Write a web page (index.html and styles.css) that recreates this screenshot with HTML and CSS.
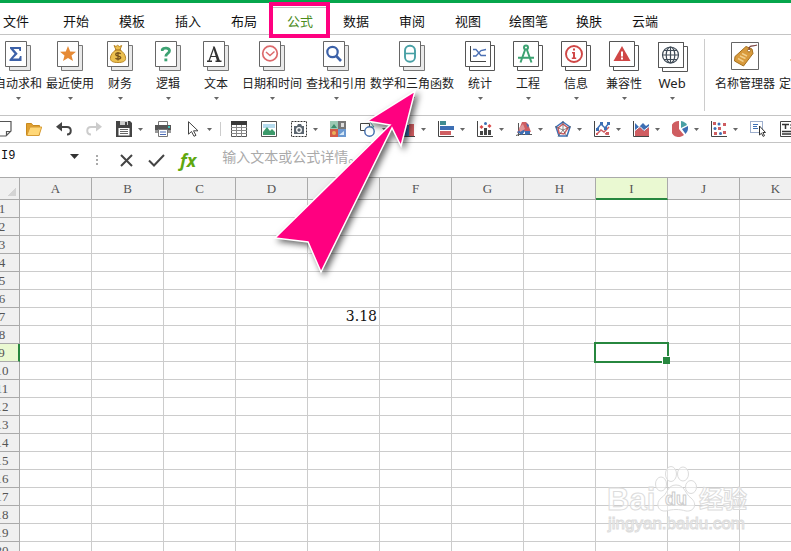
FILE: index.html
```html
<!DOCTYPE html>
<html lang="zh-CN">
<head>
<meta charset="utf-8">
<title>公式</title>
<link rel="stylesheet" href="styles.css">
</head>
<body>
<svg class="defs" aria-hidden="true">
  <symbol id="pages" viewBox="0 0 26 30">
    <path d="M4.500 4.500h21v25h-21z" fill="#e9e9e9" stroke="#777"/>
    <path d="M.5.5h21v25h-21z" fill="#fff" stroke="#666"/>
  </symbol>
  <symbol id="wide-pages" viewBox="0 0 30 30">
    <path d="M4.500 4.500h25v25h-25z" fill="#fff" stroke="#555"/>
    <path d="M.5.5h25v25h-25z" fill="#fff" stroke="#555"/>
  </symbol>
  <symbol id="caret" viewBox="0 0 5 3"><path d="M0 0h5L2.500 3z" fill="#666"/></symbol>
</svg>

<nav class="tabs">
  <button class="tab tab-file">文件</button>
  <button class="tab">开始</button>
  <button class="tab">模板</button>
  <button class="tab">插入</button>
  <button class="tab">布局</button>
  <button class="tab tab-active">公式</button>
  <button class="tab">数据</button>
  <button class="tab">审阅</button>
  <button class="tab">视图</button>
  <button class="tab">绘图笔</button>
  <button class="tab">换肤</button>
  <button class="tab">云端</button>
</nav>

<div class="ribbon">
  <button class="cmd">
    <svg width="26" height="30"><use href="#pages"/><path d="M5 6h11v4h-1.500l-.6-2H8.500l4.200 4.700L8 17.500h6l1-2.500h1.500v5H4.500v-1.500l5-5.700L5 7.500z" fill="#3c61a8"/></svg>
    <span>自动求和</span><svg class="caret" width="5" height="3"><use href="#caret"/></svg>
  </button>
  <button class="cmd">
    <svg width="26" height="30"><use href="#pages"/><path d="M11 5l2.200 5.400 5.800.4-4.500 3.700L16 20l-5-3.100L6 20l1.500-5.500L3 10.800l5.800-.4z" fill="#e68a35"/></svg>
    <span>最近使用</span><svg class="caret" width="5" height="3"><use href="#caret"/></svg>
  </button>
  <button class="cmd">
    <svg width="26" height="30"><use href="#pages"/><path d="M7 4.500l2 1 1.500-1.200L12.500 5.500l2.200-1-1.700 4.300c3 2 5.600 5 5.600 8.500 0 3-2.600 4.200-7.600 4.200s-7.600-1.200-7.600-4.200c0-3.500 2.600-6.500 5.600-8.500z" fill="#ecc04f" stroke="#b98525"/><path d="M8 9h6" stroke="#a26b17"/><path d="M13.700 12.800c-1-1.200-5-1.300-5 .6 0 2.200 5 1.200 5 3.200 0 2-4.200 1.800-5.200.5M11 11v8.500" fill="none" stroke="#76511a" stroke-width="1.300"/></svg>
    <span>财务</span><svg class="caret" width="5" height="3"><use href="#caret"/></svg>
  </button>
  <button class="cmd">
    <svg width="26" height="30"><use href="#pages"/><path d="M7.300 10V8.500C8.500 6.500 14.500 6.300 14.500 9.800c0 2.800-3.700 2.500-3.700 5.700" fill="none" stroke="#3ca272" stroke-width="2.800"/><path d="M9.400 17.500h2.900v2.800H9.400z" fill="#3ca272"/></svg>
    <span>逻辑</span><svg class="caret" width="5" height="3"><use href="#caret"/></svg>
  </button>
  <button class="cmd">
    <svg width="26" height="30"><use href="#pages"/><path d="M4 20.300h5M12.500 20.300h6" stroke="#333" stroke-width="1.500"/><path d="M6 20l4.700-13M7.500 15.500h6" fill="none" stroke="#333" stroke-width="1.200"/><path d="M9.800 5.500h1.900L17 20h-3z" fill="#333"/></svg>
    <span>文本</span><svg class="caret" width="5" height="3"><use href="#caret"/></svg>
  </button>
  <button class="cmd">
    <svg width="26" height="30"><use href="#pages"/><circle cx="11" cy="12.500" r="7.300" fill="none" stroke="#dc6a6c" stroke-width="1.700"/><path d="M7 11l4 3.500 4.500-4" fill="none" stroke="#dc6a6c" stroke-width="1.500"/></svg>
    <span>日期和时间</span><svg class="caret" width="5" height="3"><use href="#caret"/></svg>
  </button>
  <button class="cmd">
    <svg width="26" height="30"><use href="#pages"/><circle cx="9.500" cy="11" r="5.200" fill="none" stroke="#3c61a8" stroke-width="2.200"/><path d="M13.300 15l4.700 5" stroke="#3c61a8" stroke-width="2.600"/></svg>
    <span>查找和引用</span><svg class="caret" width="5" height="3"><use href="#caret"/></svg>
  </button>
  <button class="cmd">
    <svg width="26" height="30"><use href="#pages"/><rect x="6" y="4.700" width="10" height="16" rx="4.800" fill="none" stroke="#48a0a5" stroke-width="1.900"/><path d="M6 12.500h10" stroke="#48a0a5" stroke-width="1.600"/></svg>
    <span>数学和三角函数</span><svg class="caret" width="5" height="3"><use href="#caret"/></svg>
  </button>
  <button class="cmd">
    <svg width="30" height="30"><use href="#wide-pages"/><path d="M5.500 5v15.500H21" fill="none" stroke="#444"/><path d="M8 8.500h3l5 6h5M8 15h3l5-5.500 5-1" fill="none" stroke="#4a6fb4" stroke-width="1.300"/></svg>
    <span>统计</span><svg class="caret" width="5" height="3"><use href="#caret"/></svg>
  </button>
  <button class="cmd">
    <svg width="30" height="30"><use href="#wide-pages"/><circle cx="13" cy="6.500" r="2" fill="none" stroke="#3ca272" stroke-width="2"/><path d="M12 9L7.500 21.500M14 9l4.500 12.500M5 16.800h16" stroke="#3ca272" stroke-width="2" fill="none"/></svg>
    <span>工程</span><svg class="caret" width="5" height="3"><use href="#caret"/></svg>
  </button>
  <button class="cmd">
    <svg width="30" height="30"><use href="#wide-pages"/><circle cx="13" cy="13" r="8" fill="none" stroke="#d04746" stroke-width="1.900"/><path d="M12 7.500h2v2h-2zM11 11h3v5.500h1.200V18h-4.400v-1.500H12v-4h-1z" fill="#d04746"/></svg>
    <span>信息</span><svg class="caret" width="5" height="3"><use href="#caret"/></svg>
  </button>
  <button class="cmd">
    <svg width="30" height="30"><use href="#wide-pages"/><path d="M13 5l8.500 15h-17z" fill="#d04746"/><path d="M12 10.500h2v5h-2zM12 16.500h2v2h-2z" fill="#fff"/></svg>
    <span>兼容性</span><svg class="caret" width="5" height="3"><use href="#caret"/></svg>
  </button>
  <button class="cmd">
    <svg width="30" height="30" class="spill"><path d="M5.500 5.500h25v25h-25zM1.500 1.500h25v25h-25z" fill="#fff" stroke="#555"/><path d="M2 2h24v24H2z" fill="#fff"/><path d="M1.500 1.500h25v25h-25z" fill="none" stroke="#555"/><g fill="none" stroke="#3f4b57" stroke-width="1.200"><circle cx="13.500" cy="14" r="8"/><ellipse cx="13.500" cy="14" rx="4.300" ry="8"/><path d="M13.500 6v16M5.500 14h16M7 9.500h13M7 18.500h13"/></g></svg>
    <span class="latin">Web</span><svg class="caret" width="5" height="3"><use href="#caret"/></svg>
  </button>
  <div class="ribbon-sep"></div>
  <button class="cmd">
    <svg width="28" height="30"><path d="M.5 1.500h27v27H.5z" fill="#fff" stroke="#666"/><path d="M4 15.500L15 5.500l6 2.500 1 4.500L12.500 25 3.500 20z" fill="#d89a3c" stroke="#a5701e"/><path d="M9 15l5.500 2.500M11 12.500l5 2.500M7 17.500l5.500 3" stroke="#f2cf8a" stroke-width="1.500"/><circle cx="18" cy="9.500" r="1.500" fill="#fff" stroke="#a5701e"/><path d="M18 9c0-6 4-3 8-5" fill="none" stroke="#7a4440" stroke-width="1.200"/></svg>
    <span>名称管理器</span>
  </button>
  <button class="cmd">
    <svg width="28" height="30"><path d="M10 12l9-4.500 4 2-1 8-8.500 11-9-4.500z" fill="#d89a3c"/><path d="M1 19l6-6v12z" fill="#d89a3c"/></svg>
    <span>定义名称</span>
  </button>
</div>

<div class="toolbar">
  <button class="tool" aria-label="新建"><svg width="16" height="16"><path d="M.5.500h14.500v9.500l-5 5H.5zM15 10.500h-4.500v4.500" fill="#fff" stroke="#555" stroke-width="1.200"/></svg></button>
  <button class="tool" aria-label="打开"><svg width="16" height="16"><path d="M.5 14V2.500h5l1.500 2h6.500V14z" fill="#e0a030" stroke="#c98a1e"/><path d="M.8 14.500L4 6h11.700L13 14.500z" fill="#ffd777" stroke="#d79c34"/></svg></button>
  <button class="tool" aria-label="撤销"><svg width="16" height="16"><path d="M6 1v9.500L0 5.700z" fill="#444"/><path d="M5 6h6c5 0 5 7.500 0 7.500" fill="none" stroke="#444" stroke-width="2"/></svg></button>
  <button class="tool" aria-label="恢复"><svg width="16" height="16"><path d="M10 1v9.500l6-4.800z" fill="#ccc"/><path d="M11 6H5c-5 0-5 7.500 0 7.500" fill="none" stroke="#ccc" stroke-width="2"/></svg></button>
  <button class="tool" aria-label="保存"><svg width="16" height="16"><path d="M0 0h14l2 2v14H0z" fill="#444"/><path d="M4 0h8v4H4z" fill="#ccc"/><path d="M9 1h2v3H9z" fill="#444"/><path d="M2.500 7h11v7.500h-11z" fill="#fff"/><path d="M4 8.500h8M4 10.500h8M4 12.500h8" stroke="#666"/></svg><svg width="5" height="3"><use href="#caret"/></svg></button>
  <button class="tool" aria-label="打印"><svg width="16" height="16"><path d="M3.500.500h9v4h-9z" fill="#fff" stroke="#777"/><path d="M0 4h16v5H0z" fill="#555"/><path d="M0 9h16v3H0z" fill="#999"/><path d="M13 5h2v2h-2z" fill="#3fc5bd"/><path d="M3.500 8.500h9v7h-9z" fill="#fff" stroke="#777"/><path d="M5 11h6M5 13.500h6" stroke="#4b6cb7"/></svg></button>
  <button class="tool" aria-label="选择"><svg width="16" height="16"><path d="M3.500.700v12.500l3-2.700 2.500 4.800 2-1-2.500-4.500h4.500z" fill="#fff" stroke="#444"/></svg><svg width="5" height="3"><use href="#caret"/></svg></button>
  <div class="tool-sep"></div>
  <button class="tool" aria-label="表格"><svg width="16" height="16"><path d="M.5.500h15v15H.5z" fill="#fff" stroke="#555"/><path d="M0 0h16v4H0z" fill="#3a3a3a"/><path d="M0 6.500h16M0 9.500h16M0 12.500h16M5.500 4v12M10.500 4v12" stroke="#888"/></svg></button>
  <button class="tool" aria-label="图片"><svg width="16" height="16"><path d="M.5.500h15v15H.5z" fill="#fff" stroke="#555"/><path d="M2 3h12v4H2z" fill="#b5dbee"/><path d="M2 14v-3l4-5 3 4 2-2 3 3v3z" fill="#3c9a6b"/></svg></button>
  <button class="tool" aria-label="截屏"><svg width="16" height="16"><path d="M.5.500h15v15H.5z" fill="none" stroke="#333" stroke-dasharray="2 1"/><path d="M3 5h3l1-2h3l1 2h2v8H3z" fill="#5c6670"/><circle cx="8" cy="9" r="2.300" fill="#5c6670" stroke="#fff" stroke-width="1.300"/></svg><svg width="5" height="3"><use href="#caret"/></svg></button>
  <button class="tool" aria-label="图库"><svg width="16" height="16"><path d="M0 0h8v8H0z" fill="#9bc9b3"/><path d="M8 0h8v8H8z" fill="#777"/><path d="M0 8h8v8H0z" fill="#d35b4a"/><path d="M8 8h8v8H8z" fill="#6c99d0"/><path d="M1 7l3-4 3 4z" fill="#3c8c6b"/><path d="M11 2h3v4h-3z" fill="#ddd"/><circle cx="4" cy="12" r="2" fill="#eab05b"/><path d="M9 14l5-4v4z" fill="#d6e8f6"/></svg></button>
  <button class="tool" aria-label="形状"><svg width="16" height="16"><path d="M.5 2.500h9v7h-9z" fill="#fff" stroke="#444"/><path d="M10 1l4 5h-3" fill="none" stroke="#48a0a5"/><circle cx="9.500" cy="10.500" r="4.700" fill="#fff" stroke="#3f6cad" stroke-width="1.400"/></svg><svg width="5" height="3"><use href="#caret"/></svg></button>
  <button class="tool" aria-label="柱形图"><svg width="16" height="16"><path d="M.5 0v15.500H16" fill="none" stroke="#444"/><path d="M2 8h4v7H2z" fill="#48a0a5"/><path d="M6 4h4v11H6z" fill="#3d6fb4"/><path d="M10 3h5v12h-5z" fill="#cf5d61"/></svg><svg width="5" height="3"><use href="#caret"/></svg></button>
  <button class="tool" aria-label="条形图"><svg width="16" height="16"><path d="M.5 0v15.500H16" fill="none" stroke="#444"/><path d="M2 0h6v4H2z" fill="#408c91"/><path d="M2 5h14v4H2z" fill="#3d6fb4"/><path d="M2 10h11v4H2z" fill="#cf5d61"/></svg><svg width="5" height="3"><use href="#caret"/></svg></button>
  <button class="tool" aria-label="组合图"><svg width="16" height="16"><path d="M.5 0v15.500H16" fill="none" stroke="#444"/><path d="M3 10h3v4H3zM7 7h3v7H7zM11 9h3v5h-3z" fill="#444"/><path d="M4.500 4l2 2-2 2-2-2zM12.500 3l2 2-2 2-2-2z" fill="#d84b4b"/><circle cx="8.500" cy="2.500" r="1.500" fill="#3d6fb4"/></svg><svg width="5" height="3"><use href="#caret"/></svg></button>
  <button class="tool" aria-label="曲面图"><svg width="16" height="16"><path d="M2.500 2v13M0 14.500l3-1h13" fill="none" stroke="#555"/><path d="M6 1h4l2 2 3 8-5-1-9 2 3-6z" fill="#cf5d61"/><path d="M1 11l5-3 3 2-3 4zM9 10h5v3l-5 1zM10 2l3 2-1 3z" fill="#3d6fb4"/><path d="M3 7l4-4 2 5-5 3z" fill="#e0979a"/></svg><svg width="5" height="3"><use href="#caret"/></svg></button>
  <button class="tool" aria-label="雷达图"><svg width="16" height="16"><path d="M8 1l7 5-3 9H4L1 6z" fill="none" stroke="#3d6fb4" stroke-width="1.500"/><path d="M8 3l5 4-4 6-5-1-1-5z" fill="none" stroke="#cf5d61" stroke-width="1.500"/><path d="M8 0v9L0 5.500M8 9l8-3.500M8 9l4 6.500M8 9l-5 6.500" fill="none" stroke="#555" stroke-width=".7"/></svg><svg width="5" height="3"><use href="#caret"/></svg></button>
  <button class="tool" aria-label="折线图"><svg width="16" height="16"><path d="M.5 0v15.500H16" fill="none" stroke="#444"/><path d="M3 13l4-4 3 2 5-5M14 12l-3 1" fill="none" stroke="#cf5d61" stroke-width="1.500"/><path d="M3 8l4-5 4 4 4-5" fill="none" stroke="#3d6fb4" stroke-width="1.500"/><path d="M2 7h3v3H2zM6 1h3v3H6zM10 6h3v3h-3zM13 1h3v3h-3z" fill="#3d6fb4"/><path d="M2 12h2v2H2zM12 11h3v3h-3z" fill="#cf5d61"/></svg><svg width="5" height="3"><use href="#caret"/></svg></button>
  <button class="tool" aria-label="面积图"><svg width="16" height="16"><path d="M.5 0v15.500H16" fill="none" stroke="#444"/><path d="M2 2l4 4 4-4 3 3 3-2v11H2z" fill="#3d6fb4"/><path d="M2 10l5-4 4 4 5-4v9H2z" fill="#cf5d61"/><path d="M2 9.500l5-4 4 4 5-4" fill="none" stroke="#fff"/></svg><svg width="5" height="3"><use href="#caret"/></svg></button>
  <button class="tool" aria-label="饼图"><svg width="16" height="16"><path d="M7 0v8l5 6A8 8 0 1 1 7 0z" fill="#cf5d61"/><path d="M9 0c3 .5 5 2 6 4L9 7z" fill="#48a0a5"/><path d="M16 5c.5 3-.5 6-2.500 8L10 8z" fill="#3d6fb4"/></svg><svg width="5" height="3"><use href="#caret"/></svg></button>
  <button class="tool" aria-label="散点图"><svg width="16" height="16"><path d="M.5 0v15.500H16" fill="none" stroke="#444"/><path d="M2 1h3v3H2zM12 2h3v3h-3zM7 6h3v3H7zM3 11h3v3H3zM12 10h3v3h-3z" fill="#cf5d61"/><circle cx="8" cy="3" r="1.500" fill="#3d6fb4"/><circle cx="4" cy="7.500" r="1.500" fill="#3d6fb4"/><circle cx="9.500" cy="12.500" r="1.500" fill="#3d6fb4"/></svg><svg width="5" height="3"><use href="#caret"/></svg></button>
  <button class="tool" aria-label="选择对象"><svg width="16" height="16"><path d="M.5.500h12v11H.5z" fill="none" stroke="#3d5f9a" stroke-dasharray="1 1"/><path d="M3 3.500h5M3 5.500h4M3 7.500h5" stroke="#3d6fb4"/><path d="M9.500 5v9l2-1.800 1.600 3.200 1.400-.7-1.600-3.200h2.600z" fill="#fff" stroke="#333"/></svg></button>
  <button class="tool" aria-label="文本框"><svg width="16" height="16"><path d="M.5.500h17v15H.5z" fill="#fff" stroke="#444"/><path d="M2 3.500h7M5.500 3v5M2 10.500h14M2 13h14" stroke="#333" stroke-width="1.500"/><path d="M10 4h6M10 7h6" stroke="#333"/></svg></button>
</div>

<div class="formula-bar">
  <label class="name-box"><input class="name-input" aria-label="名称框" value="I9"><svg width="9" height="5"><path d="M0 0h9L4.500 5z" fill="#333"/></svg></label>
  <svg class="dots" width="2" height="10"><path d="M0 0h2v2H0zM0 4h2v2H0zM0 8h2v2H0z" fill="#aaa"/></svg>
  <button class="edit-btn" aria-label="取消"><svg width="13" height="13"><path d="M1 1l11 11M12 1L1 12" stroke="#444" stroke-width="2"/></svg></button>
  <button class="edit-btn" aria-label="确认"><svg width="17" height="13"><path d="M1 6.500l5 5L16 1" fill="none" stroke="#444" stroke-width="2"/></svg></button>
  <button class="edit-btn fx" aria-label="插入函数">fx</button>
  <input class="formula-input" aria-label="编辑栏" placeholder="输入文本或公式详情。">
</div>

<div class="sheet"><table class="grid"><thead></thead><tbody></tbody></table></div>

<div class="tab-mark"></div>
<svg class="arrow" width="170" height="200" viewBox="0 0 170 200" aria-hidden="true">
  <path d="M148 8L100 38l23 4L8 155l33 4 13 30 71-144 9 18z" fill="#ff0080" stroke="#fff" stroke-width="1.500"/>
</svg>
<svg class="watermark" width="150" height="80" viewBox="0 0 150 80">
  <g fill="#fff" fill-opacity=".5" stroke="#dcdcdc">
    <text x="5" y="50" font-size="31" font-weight="bold">Bai</text>
    <ellipse cx="59" cy="24" rx="5.500" ry="7"/><ellipse cx="69" cy="14" rx="5.500" ry="7.500"/><ellipse cx="81" cy="14" rx="5.500" ry="7"/><ellipse cx="89" cy="27" rx="5.500" ry="6.500"/>
    <path d="M74 25c9 0 9 9 15 13 7 6 3 14-5 13-7-2-13-2-20 0-8 1-11-7-5-13 7-4 6-13 15-13z"/>
    <text x="63" y="45" font-size="18" font-weight="bold" stroke="#ccc">du</text>
    <text x="97" y="48" font-size="24" font-weight="bold">经验</text>
    <text x="6" y="69" font-size="17">jingyan.baidu.com</text>
  </g>
</svg>
<script src="grid.js"></script>
</body>
</html>
```
FILE: styles.css
```css
* { box-sizing: border-box; }

body {
  margin: 0;
  height: 100vh;
  display: flex;
  flex-direction: column;
  overflow: hidden;
  background: #fff;
  color: #222;
  font: 12px/16px "Noto Sans CJK SC", sans-serif;
}

button, input {
  margin: 0;
  padding: 0;
  border: 0;
  background: none;
  color: inherit;
  font: inherit;
}

svg { display: block; flex: none; }
.defs { position: absolute; width: 0; height: 0; }
.spill { overflow: visible; }

.tabs {
  display: flex;
  flex: none;
  padding-top: 4px;
  border-top: 3px solid #06a64c;
  border-bottom: 1px solid #c4c4c4;
}
.tab {
  flex: none;
  min-width: 56px;
  height: 27px;
  padding: 0 13px;
  font-size: 13px;
  color: #111;
}
.tab-file { min-width: 48px; padding: 0 19px 0 3px; }
.tab-active {
  border: 1px solid #c4c4c4;
  border-bottom: 0;
  padding: 0;
  color: #4c8c1c;
}

.ribbon {
  display: flex;
  flex: none;
  height: 80px;
  margin-left: -8px;
  overflow: hidden;
}
.cmd {
  display: flex;
  flex: none;
  flex-direction: column;
  align-items: center;
  min-width: 48px;
  padding: 6px 2px 0;
  white-space: nowrap;
}
.cmd span { margin-top: 4px; }
.latin { font-family: "Noto Sans", sans-serif; font-size: 13px; }
.caret { margin-top: 6px; }
.ribbon-sep {
  flex: none;
  width: 1px;
  margin: 4px 8px 4px;
  background: #ccc;
}

.toolbar {
  display: flex;
  flex: none;
  align-items: center;
  height: 28px;
  margin-left: -11px;
  border-top: 1px solid #c4c4c4;
  border-bottom: 1px solid #c4c4c4;
  overflow: hidden;
}
.tool {
  display: flex;
  flex: none;
  align-items: center;
  gap: 6px;
  min-width: 30px;
  height: 26px;
  padding: 0 5px 0 7px;
}
.tool-sep {
  flex: none;
  width: 1px;
  height: 14px;
  margin: 0 3px;
  background: #ccc;
}

.formula-bar {
  display: flex;
  flex: none;
  align-items: center;
  height: 34px;
}
.name-box {
  display: flex;
  flex: none;
  align-items: center;
  width: 96px;
  padding: 0 17px 8px 1px;
}
.name-input {
  flex: 1;
  min-width: 0;
  font-family: "Liberation Mono", monospace;
  font-size: 12px;
  color: #111;
}
.dots { margin-right: 22px; }
.edit-btn { flex: none; margin-right: 15px; }
.fx {
  margin-right: 26px;
  color: #5fa80f;
  font: italic bold 18px/20px "Open Sans", sans-serif;
}
.formula-input {
  flex: 1;
  min-width: 0;
  padding-bottom: 8px;
  font-size: 14px;
}
.formula-input::placeholder { color: #aaa; opacity: 1; }

.sheet {
  flex: 1;
  min-height: 0;
  margin-left: -15px;
  overflow: hidden;
  border-top: 1px solid #aaa;
}
.grid {
  width: 1907px;
  table-layout: fixed;
  border-collapse: separate;
  border-spacing: 0;
}
.grid th, .grid td {
  width: 72px;
  height: 18px;
  padding: 0;
  border-right: 1px solid #ccc;
  border-bottom: 1px solid #ccc;
  line-height: 17px;
}
.grid th {
  border-color: #aaa;
  background: #f0f0f0;
  color: #555;
  font: 13px/17px "Liberation Serif", serif;
}
.grid thead th { height: 22px; }
.grid th:first-child { width: 35px; }
.grid .corner {
  background: linear-gradient(135deg, transparent 50%, #d4d4d4 50%) right 3px bottom 3px / 8px 8px no-repeat #f0f0f0;
}
.grid th.current { background: #eaf9d2; }
.grid thead th.current { border-bottom: 2px solid #27873f; }
.grid tbody th.current { border-right: 2px solid #27873f; }
.grid td {
  padding-right: 2px;
  text-align: right;
  font-family: "DejaVu Serif", serif;
  font-size: 14px;
  color: #111;
}
.grid .active { position: relative; }
.active::before {
  content: "";
  position: absolute;
  inset: -2px;
  border: 2px solid #27873f;
}
.active::after {
  content: "";
  position: absolute;
  right: -3px;
  bottom: -3px;
  width: 7px;
  height: 7px;
  border: solid #fff;
  border-width: 1px 0 0 1px;
  background: #27873f;
}

.tab-mark {
  position: absolute;
  top: 2px;
  left: 269px;
  width: 61px;
  height: 36px;
  border: 4px solid #ff0080;
}
.arrow {
  position: absolute;
  top: 83px;
  left: 267px;
  filter: drop-shadow(3px 3px 3px rgba(0, 0, 0, .6));
}
.watermark {
  position: absolute;
  right: 39px;
  bottom: 11px;
  font-family: "Liberation Sans", "Noto Sans CJK SC", sans-serif;
}
```
FILE: grid.js
```js
const columns = "ABCDEFGHIJKLMNOPQRSTUVWXYZ".split("");
const rowCount = 60;
const values = { E7: "3.18" };
const current = { column: "I", row: 9 };

const head = document.querySelector(".grid thead").insertRow();
const corner = document.createElement("th");
corner.className = "corner";
head.append(corner);
for (const name of columns) {
  const th = document.createElement("th");
  th.textContent = name;
  if (name === current.column) th.className = "current";
  head.append(th);
}

const body = document.querySelector(".grid tbody");
for (let r = 1; r <= rowCount; r++) {
  const row = body.insertRow();
  const th = document.createElement("th");
  th.textContent = r;
  if (r === current.row) th.className = "current";
  row.append(th);
  for (const name of columns) {
    const cell = row.insertCell();
    cell.textContent = values[name + r] || "";
    if (r === current.row && name === current.column) cell.className = "active";
  }
}
```
